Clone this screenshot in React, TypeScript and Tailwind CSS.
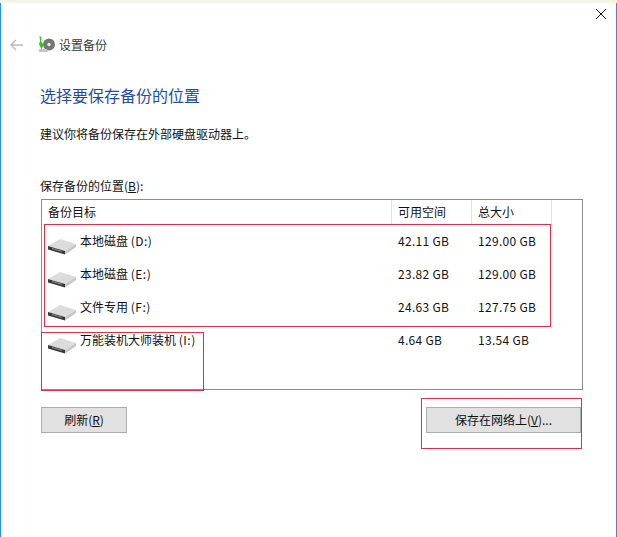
import React from 'react';

const drives = [
  { name: '本地磁盘', letter: '(D:)', free: '42.11 GB', total: '129.00 GB' },
  { name: '本地磁盘', letter: '(E:)', free: '23.82 GB', total: '129.00 GB' },
  { name: '文件专用', letter: '(F:)', free: '24.63 GB', total: '127.75 GB' },
  { name: '万能装机大师装机', letter: '(I:)', free: '4.64 GB', total: '13.54 GB' },
];

function DriveIcon() {
  return (
    <svg width="30" height="16" viewBox="0 0 30 16" className="shrink-0">
      <path d="M1 7 L13 0 L29 5 L18 12 Z" fill="#dcdcdc" />
      <path d="M1 7 L18 12 V15.5 L1 10.5 Z" fill="#3a3a3a" />
      <path d="M18 12 L29 5 V8 L18 15.5 Z" fill="#c6c6c6" />
      <path d="M5 9.4 L15 12.4" stroke="#8f8f8f" strokeWidth="1" />
    </svg>
  );
}

function BackupIcon() {
  return (
    <svg width="18" height="18" viewBox="0 0 18 18">
      <circle cx="11" cy="8.5" r="6" fill="#777" />
      <circle cx="11" cy="8.5" r="1.7" fill="#e8e8e8" />
      <path d="M1 13 H9 L10 16 H1 Z" fill="#c4c4c4" />
      <path d="M1.5 0 L3.5 1 L3 5 L5.5 9 L3.5 13.5 L1 8 L2 5 Z" fill="#35c41f" />
    </svg>
  );
}

export default function App() {
  return (
    <div className="flex h-[537px] w-[617px] flex-col overflow-hidden bg-white font-['Noto_Sans_CJK_SC','Liberation_Sans',sans-serif] text-xs text-[#111]">
      <div className="h-[3px] shrink-0 bg-[#f3f3ec]" />
      <div className="relative flex flex-1 flex-col border-x border-[#2d8fe3]">
        {/* close */}
        <div className="mt-[6px] flex justify-end pr-[10px]">
          <svg width="10" height="10" viewBox="0 0 10 10">
            <path d="M0 0 L10 10 M10 0 L0 10" stroke="#111" strokeWidth="1" />
          </svg>
        </div>

        {/* nav */}
        <div className="mt-[14px] flex h-[24px] items-center pl-[9px]">
          <svg width="13" height="12" viewBox="0 0 13 12">
            <path d="M6 1 L1 6 L6 11 M1 6 H13" fill="none" stroke="#bdbdbd" strokeWidth="1.5" />
          </svg>
          <div className="ml-[15px] flex">
            <BackupIcon />
          </div>
          <span className="ml-[3px] text-[#3a3a3a]">设置备份</span>
        </div>

        {/* heading */}
        <div className="mt-[26px] pl-[39px] text-base leading-[24px] text-[#1f4d9e]">选择要保存备份的位置</div>
        <div className="mt-[18px] pl-[39px] leading-[18px]">建议你将备份保存在外部硬盘驱动器上。</div>

        <div className="mt-[34px] pl-[39px] leading-[18px]">
          保存备份的位置(<span className="underline">B</span>):
        </div>

        {/* list */}
        <div className="ml-[40px] mt-[4px] h-[191px] w-[542px] border border-[#8c8c8c]">
          <div className="flex h-[24px] w-[510px]">
            <div className="h-full w-[350px] border-r border-[#e3e3e3] pl-[6px] leading-[24px]">备份目标</div>
            <div className="h-full w-[80px] border-r border-[#e3e3e3] pl-[6px] leading-[24px]">可用空间</div>
            <div className="h-full w-[80px] border-r border-[#e3e3e3] pl-[6px] leading-[24px]">总大小</div>
          </div>
          {drives.map((d) => (
            <div key={d.letter} className="flex h-[33px] w-[510px]">
              <div className="flex w-[350px] items-start pl-[5px]">
                <div className="mt-[15px]">
                  <DriveIcon />
                </div>
                <span className="ml-[3px] mt-[8px] leading-[17px]">
                  {d.name} <span className="tracking-[0.5px]">{d.letter}</span>
                </span>
              </div>
              <div className="w-[80px] pl-[6px] pt-[8px] leading-[17px] tracking-[0.3px]">{d.free}</div>
              <div className="w-[80px] pl-[6px] pt-[8px] leading-[17px] tracking-[0.3px]">{d.total}</div>
            </div>
          ))}
        </div>

        {/* buttons */}
        <div className="ml-[40px] mt-[17px] flex w-[540px] justify-between">
          <button className="h-[26px] w-[86px] border border-[#adadad] bg-[#e1e1e1] text-xs text-[#111]">
            刷新(<span className="underline">R</span>)
          </button>
          <button className="h-[26px] w-[155px] border border-[#adadad] bg-[#e1e1e1] text-xs text-[#111]">
            保存在网络上(<span className="underline">V</span>)...
          </button>
        </div>

        {/* red annotation boxes */}
        <div className="absolute left-[43px] top-[221px] h-[103px] w-[507px] border border-[#d8334a]" />
        <div className="absolute left-[40px] top-[329px] h-[59px] w-[163px] border border-[#d8334a]" />
        <div className="absolute left-[420px] top-[395px] h-[51px] w-[161px] border border-[#d8334a]" />
      </div>
    </div>
  );
}
